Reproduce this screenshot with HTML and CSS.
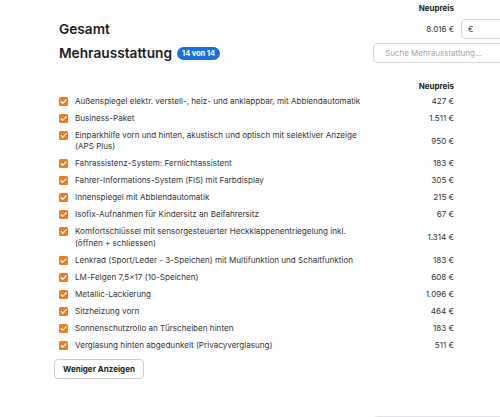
FILE: index.html
```html
<!DOCTYPE html>
<html lang="de">
<head>
    <meta charset="UTF-8">
    <meta name="viewport" content="width=device-width, initial-scale=1.0">
    <title>Mehrausstattung</title>
    <link rel="stylesheet" href="styles.css">
</head>
<body>

    <div class="page">

        <!-- Kopfbereich mit Gesamtpreis -->
        <div class="head-row label-row">
            <div class="head-main"></div>
            <div class="price-col col-label">Neupreis</div>
        </div>

        <div class="head-row total-row">
            <h2 class="head-main title">Gesamt</h2>
            <div class="price-col total">8.016 €</div>
            <div class="field price-field">€</div>
        </div>

        <div class="head-row extras-row">
            <h2 class="head-main title">Mehrausstattung <span class="badge">14 von 14</span></h2>
            <div class="field search-field">Suche Mehrausstattung...</div>
        </div>

        <!-- Liste der Ausstattung -->
        <div class="list">
            <div class="list-head">
                <div class="col-label">Neupreis</div>
            </div>
            <div id="items"></div>
        </div>

        <button class="toggle">Weniger Anzeigen</button>

        <div class="field next-field"></div>
    </div>

    <script>
        const extras = [
            ['Außenspiegel elektr. verstell-, heiz- und anklappbar, mit Abblendautomatik', '427 €'],
            ['Business-Paket', '1.511 €'],
            ['Einparkhilfe vorn und hinten, akustisch und optisch mit selektiver Anzeige (APS Plus)', '950 €'],
            ['Fahrassistenz-System: Fernlichtassistent', '183 €'],
            ['Fahrer-Informations-System (FIS) mit Farbdisplay', '305 €'],
            ['Innenspiegel mit Abblendautomatik', '215 €'],
            ['Isofix-Aufnahmen für Kindersitz an Beifahrersitz', '67 €'],
            ['Komfortschlüssel mit sensorgesteuerter Heckklappenentriegelung inkl. (öffnen + schliessen)', '1.314 €'],
            ['Lenkrad (Sport/Leder - 3-Speichen) mit Multifunktion und Schaltfunktion', '183 €'],
            ['LM-Felgen 7,5×17 (10-Speichen)', '608 €'],
            ['Metallic-Lackierung', '1.096 €'],
            ['Sitzheizung vorn', '464 €'],
            ['Sonnenschutzrollo an Türscheiben hinten', '183 €'],
            ['Verglasung hinten abgedunkelt (Privacyverglasung)', '511 €']
        ];

        const items = document.getElementById('items');

        extras.forEach(([name, price]) => {
            const row = document.createElement('label');
            row.className = 'item';
            row.innerHTML =
                '<span class="check"><svg viewBox="0 0 10 10"><path d="M2.3 5.2 4.2 7 7.8 3.2"/></svg></span>' +
                '<span class="item-name"></span>' +
                '<span class="item-price"></span>';
            row.querySelector('.item-name').textContent = name;
            row.querySelector('.item-price').textContent = price;
            items.appendChild(row);
        });
    </script>

</body>
</html>
```

FILE: styles.css
```css
body {
    margin: 0;
    font-family: Inter, "Noto Sans", sans-serif;
    color: #1a1d21;
    background: #fff;
    overflow: hidden;
}

.page {
    width: 560px;
    padding: 2px 0 0 59px;
}

.head-row {
    display: flex;
    align-items: center;
    width: 501px;
}

.head-row > * {
    flex: none;
}

.head-main {
    width: 395px;
    margin: 0;
}

.label-row {
    height: 11px;
}

.col-label {
    font-size: 8px;
    font-weight: 700;
    color: #222;
    text-align: right;
}

.price-col {
    width: 0;
    display: flex;
    justify-content: flex-end;
    white-space: nowrap;
}

.title {
    font-size: 13.7px;
    font-weight: 600;
    line-height: 22px;
    display: flex;
    align-items: center;
}

.total {
    font-size: 8px;
    color: #333;
}

.total-row {
    margin-top: 5px;
}

.field {
    border: 1px solid #d6d8dc;
    border-radius: 4px;
    height: 18px;
    box-sizing: content-box;
    display: flex;
    align-items: center;
    font-size: 8px;
    background: #fff;
}

.price-field {
    margin-left: 7px;
    width: 100px;
    padding-left: 6px;
    color: #333;
}

.extras-row {
    margin-top: 2px;
}

.extras-row .head-main {
    width: 314px;
}

.search-field {
    width: 160px;
    padding-left: 11px;
    color: #a3a7ad;
}

.badge {
    display: inline-block;
    margin-left: 5px;
    padding: 0 5px;
    height: 13px;
    line-height: 13px;
    border-radius: 7px;
    background: #1a6fe3;
    color: #fff;
    font-size: 7.5px;
    font-weight: 700;
    letter-spacing: -0.1px;
}

.list {
    width: 395px;
    margin-top: 15px;
}

.list-head {
    display: flex;
    justify-content: flex-end;
    height: 14px;
    align-items: center;
}

.item {
    display: flex;
    align-items: center;
    padding: 2.75px 0;
    font-size: 8.1px;
    line-height: 11.5px;
    color: #353535;
}

.check {
    flex: none;
    width: 9px;
    height: 9px;
    border-radius: 1.5px;
    background: #ee7c22;
    margin: 1px 7px 0 0;
    align-self: flex-start;
}

.check svg {
    display: block;
    width: 9px;
    height: 9px;
    fill: none;
    stroke: #fff;
    stroke-width: 1.4;
    stroke-linecap: round;
    stroke-linejoin: round;
}

.item-name {
    flex: 0 0 290px;
}

.item-price {
    flex: none;
    margin-left: auto;
    white-space: nowrap;
    text-align: right;
}

.toggle {
    display: block;
    margin: 5px 0 0 -5px;
    height: 20px;
    padding: 0 8px;
    border: 1px solid #c9ccd1;
    border-radius: 4px;
    background: #fff;
    font-family: Inter, "Noto Sans", sans-serif;
    font-size: 8px;
    font-weight: 700;
    color: #222;
    cursor: pointer;
}

.next-field {
    margin: 37px 0 0 314px;
    width: 160px;
    border-color: #e2e4e7;
}
```
